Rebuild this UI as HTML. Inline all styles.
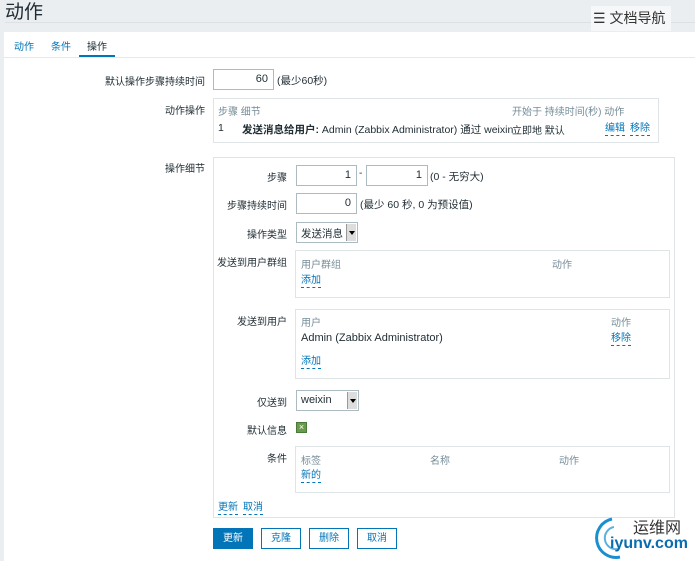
<!DOCTYPE html>
<html><head><meta charset="utf-8"><style>
*{box-sizing:border-box;margin:0;padding:0}
body{width:695px;height:561px;overflow:hidden;background:#ebeef0;font-family:"Liberation Sans","Noto Sans CJK SC",sans-serif;font-size:10px;color:#1f2c33;position:relative}
.a{position:absolute;white-space:nowrap}
.lbl{position:absolute;text-align:right;white-space:nowrap}
.inp{position:absolute;background:#fff;border:1px solid #acbbc2;height:21px;text-align:right;padding:3px 5px;font-size:11px}
.box{position:absolute;border:1px solid #dfe4e7;background:#fff}
.lnk{color:#0275b8;border-bottom:1px dashed #0275b8;position:absolute;line-height:13px;white-space:nowrap}
.g{color:#768d99;position:absolute;white-space:nowrap}
.sel{position:absolute;background:#fff;border:1px solid #acbbc2;height:21px;padding:3px 4px;font-size:11px}
.sel i{position:absolute;right:1px;top:1px;width:10px;height:17px;background:#ddd;border-left:1px solid #999}
.sel i:after{content:"";position:absolute;left:2px;top:7px;border:3px solid transparent;border-top:4px solid #000}
.btn{position:absolute;top:528px;height:21px;border:1px solid #0275b8;color:#0275b8;background:#fff;text-align:center;line-height:19px;width:40px}
</style></head><body>
<div class="a" style="left:5px;top:-3px;font-size:19px;color:#1f2c33">动作</div>
<div class="a" style="left:5px;top:22px;width:690px;border-top:1px solid #dde1e3"></div>
<div class="a" style="left:591px;top:6px;width:80px;height:25px;background:#f6f7f8;font-size:14px;line-height:25px;padding-left:2px;color:#333">☰ 文档导航</div>
<div class="a" style="left:4px;top:32px;width:691px;height:529px;background:#fff"></div>
<div class="a" style="left:4px;top:57px;width:691px;border-top:1px solid #e5e9eb"></div>
<div class="a" style="left:14px;top:38px;color:#0275b8">动作</div>
<div class="a" style="left:51px;top:38px;color:#0275b8">条件</div>
<div class="a" style="left:87px;top:38px">操作</div>
<div class="a" style="left:79px;top:55px;width:36px;height:2px;background:#0275b8"></div>

<div class="lbl" style="right:490px;top:73px">默认操作步骤持续时间</div>
<div class="inp" style="left:213px;top:69px;width:61px;height:21px">60</div>
<div class="a" style="left:277px;top:73px;font-size:10.5px">(最少60秒)</div>

<div class="lbl" style="right:490px;top:102px">动作操作</div>
<div class="box" style="left:213px;top:98px;width:446px;height:45px"></div>
<div class="g" style="left:218px;top:103px">步骤 细节</div>
<div class="g" style="left:512px;top:103px">开始于 持续时间(秒) 动作</div>
<div class="a" style="left:218px;top:122px;font-size:10.5px">1</div>
<div class="a" style="left:242px;top:122px;font-size:10.5px"><b>发送消息给用户:</b> Admin (Zabbix Administrator) 通过 weixin</div>
<div class="a" style="left:512px;top:122px">立即地 默认</div>
<span class="lnk" style="left:605px;top:122px">编辑</span>
<span class="lnk" style="left:630px;top:122px">移除</span>

<div class="lbl" style="right:490px;top:160px">操作细节</div>
<div class="box" style="left:213px;top:157px;width:462px;height:361px"></div>
<div class="lbl" style="right:408px;top:169px">步骤</div>
<div class="inp" style="left:296px;top:165px;width:61px">1</div>
<div class="a" style="left:359px;top:168px">-</div>
<div class="inp" style="left:366px;top:165px;width:62px">1</div>
<div class="a" style="left:430px;top:169px;font-size:10.5px">(0 - 无穷大)</div>
<div class="lbl" style="right:408px;top:197px">步骤持续时间</div>
<div class="inp" style="left:296px;top:193px;width:61px">0</div>
<div class="a" style="left:360px;top:197px;font-size:10.5px">(最少 60 秒, 0 为预设值)</div>
<div class="lbl" style="right:408px;top:226px">操作类型</div>
<div class="sel" style="left:296px;top:222px;width:62px;font-size:10.5px">发送消息<i></i></div>
<div class="lbl" style="right:408px;top:254px">发送到用户群组</div>
<div class="box" style="left:295px;top:250px;width:375px;height:48px"></div>
<div class="g" style="left:301px;top:256px">用户群组</div>
<div class="g" style="left:552px;top:256px">动作</div>
<span class="lnk" style="left:301px;top:274px">添加</span>
<div class="lbl" style="right:408px;top:313px">发送到用户</div>
<div class="box" style="left:295px;top:309px;width:375px;height:70px"></div>
<div class="g" style="left:301px;top:314px">用户</div>
<div class="g" style="left:611px;top:314px">动作</div>
<div class="a" style="left:301px;top:332px;font-size:11px">Admin (Zabbix Administrator)</div>
<span class="lnk" style="left:611px;top:332px">移除</span>
<span class="lnk" style="left:301px;top:355px">添加</span>
<div class="lbl" style="right:408px;top:394px">仅送到</div>
<div class="sel" style="left:296px;top:390px;width:63px">weixin<i></i></div>
<div class="lbl" style="right:408px;top:422px">默认信息</div>
<div class="a" style="left:296px;top:422px;width:11px;height:11px;background:#6a9a4a;border:1px solid #4a7a3a;color:#fff;font-size:9px;line-height:9px;text-align:center">×</div>
<div class="lbl" style="right:408px;top:450px">条件</div>
<div class="box" style="left:295px;top:446px;width:375px;height:47px"></div>
<div class="g" style="left:301px;top:452px">标签</div>
<div class="g" style="left:430px;top:452px">名称</div>
<div class="g" style="left:559px;top:452px">动作</div>
<span class="lnk" style="left:301px;top:469px">新的</span>
<span class="lnk" style="left:218px;top:501px">更新</span>
<span class="lnk" style="left:243px;top:501px">取消</span>

<div class="btn" style="left:213px;background:#0275b8;color:#fff">更新</div>
<div class="btn" style="left:261px">克隆</div>
<div class="btn" style="left:309px">删除</div>
<div class="btn" style="left:357px">取消</div>

<svg class="a" style="left:590px;top:513px" width="40" height="48"><path d="M22 6 A18 18 0 1 0 30 44" fill="none" stroke="#1a8fd0" stroke-width="3"/><path d="M24 14 A11 11 0 1 0 28 36" fill="none" stroke="#5ab0e0" stroke-width="2"/></svg>
<div class="a" style="left:633px;top:514px;font-size:16px;color:#333">运维网</div>
<div class="a" style="left:610px;top:535px;font-size:16px;font-weight:bold;color:#0a6db0">iyunv.com</div>
</body></html>
